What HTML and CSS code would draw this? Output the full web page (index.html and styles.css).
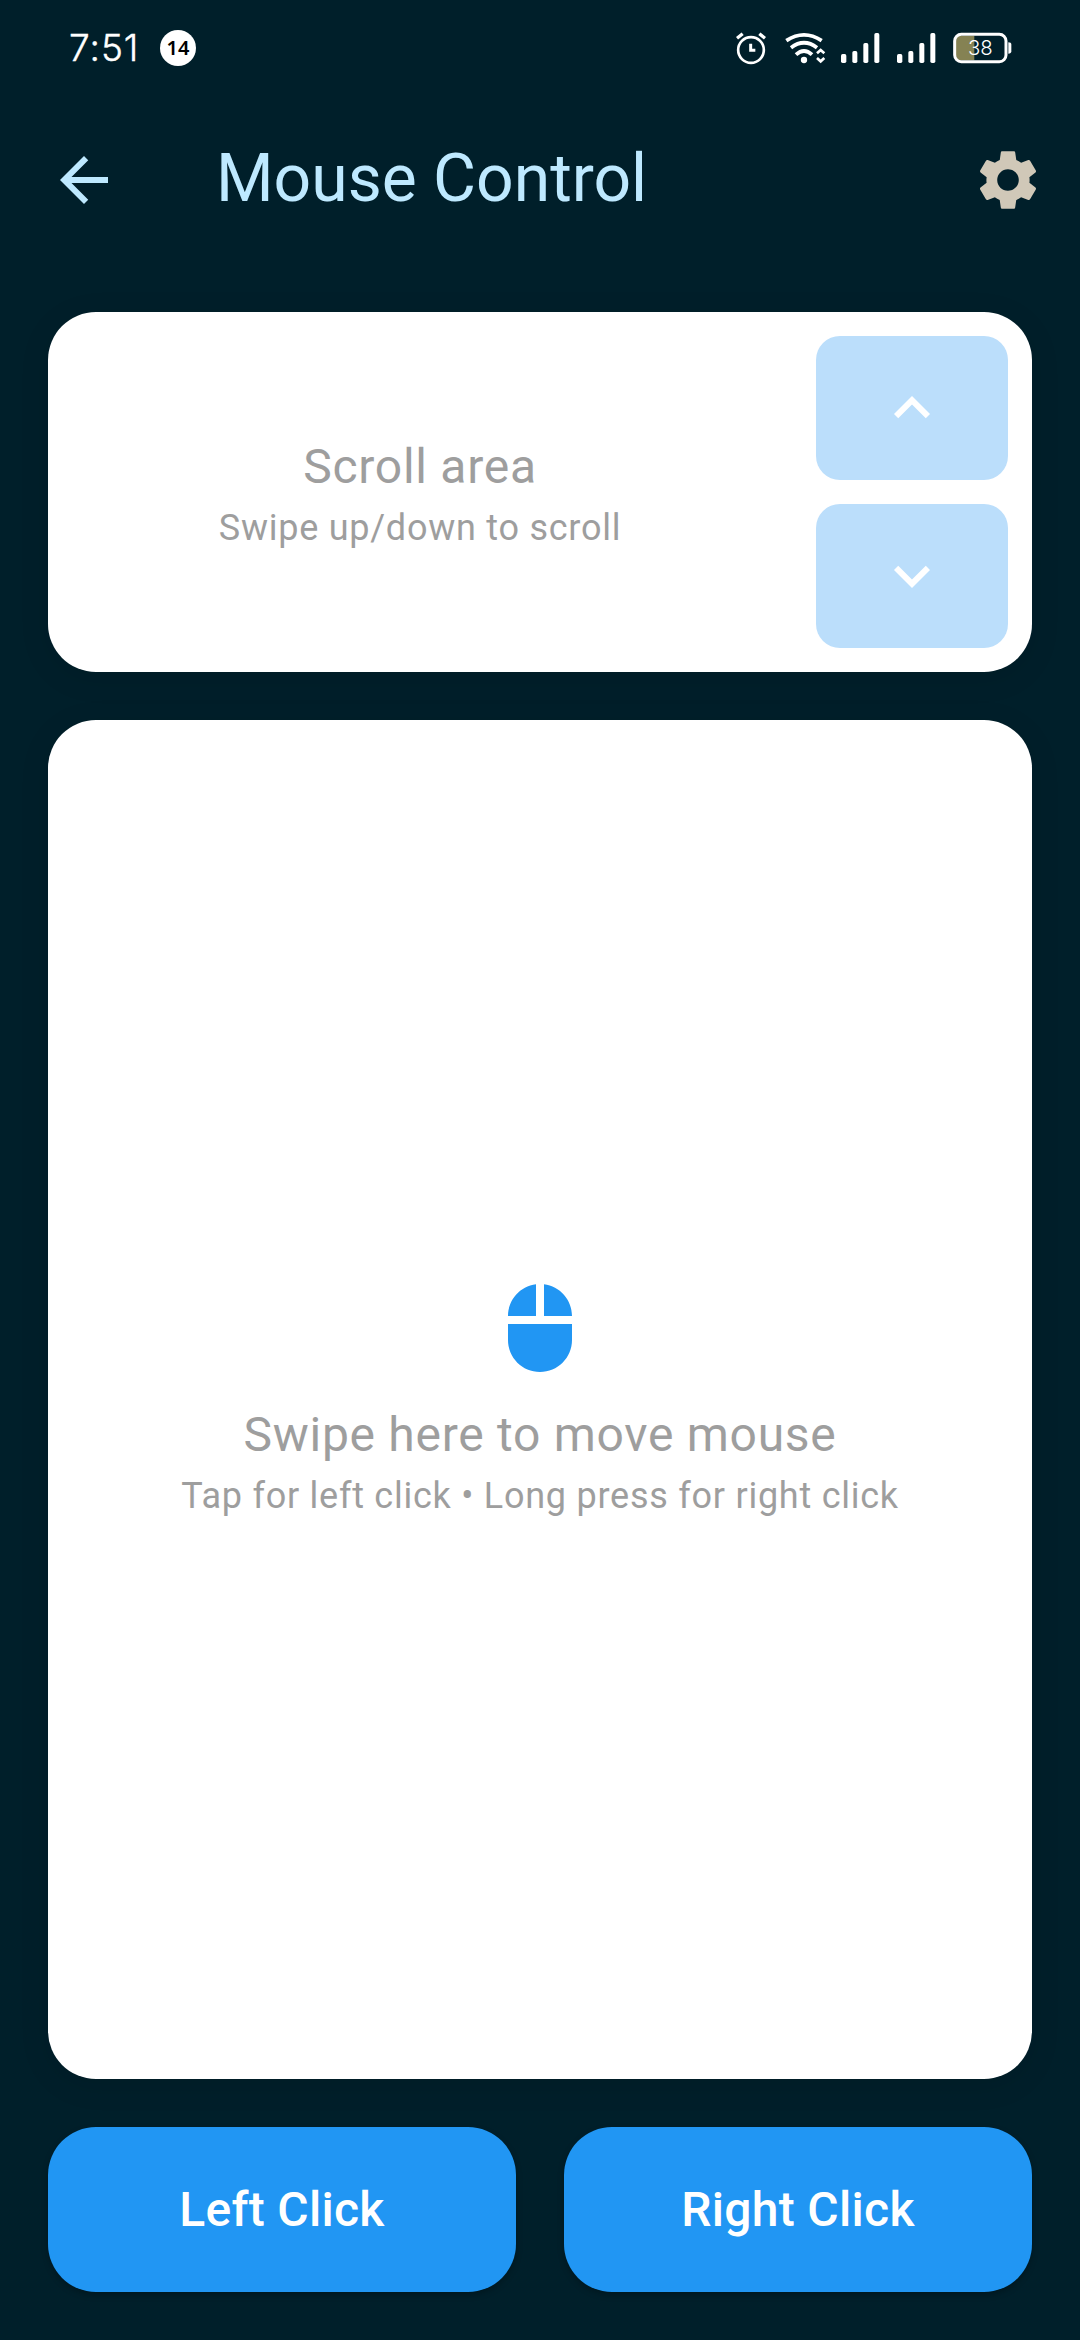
FILE: index.html
```html
<!DOCTYPE html>
<html lang="en">
<head>
<meta charset="utf-8">
<title>Mouse Control</title>
<link rel="stylesheet" href="styles.css">
</head>
<body>
<div class="screen">
  <div class="status">
    <span class="time">7:51</span>
    <span class="badge">14</span>
    <div class="status-icons">
      <svg class="alarm" viewBox="48 66 90 99" width="30" height="33">
        <g fill="none" stroke="#fff">
          <circle cx="93" cy="120" r="38.5" stroke-width="8"/>
          <path d="M51 85L68 71M135 85L118 71" stroke-width="10"/>
          <path d="M92 101V121H106" stroke-width="9"/>
        </g>
      </svg>
      <svg class="wifi" viewBox="195 66 123 99" width="41" height="33">
        <g fill="none" stroke="#fff" stroke-width="11.5">
          <path d="M199 92Q252 57 305 92"/>
          <path d="M213 113Q252 84 291 113"/>
          <path d="M228 134Q252 112 276 134"/>
          <path d="M291 130L302 120L313 130M291 144L302 154L313 144" stroke-width="8"/>
        </g>
        <circle cx="252" cy="150" r="9.5" fill="#fff"/>
      </svg>
      <svg class="signal" viewBox="362 66 117 99" width="39" height="33">
        <g fill="#fff">
          <rect x="362" y="132" width="16" height="27" rx="5"/>
          <rect x="396" y="123" width="15" height="36" rx="5"/>
          <rect x="429" y="99" width="15" height="60" rx="5"/>
          <rect x="462" y="69" width="15" height="90" rx="5"/>
        </g>
      </svg>
      <svg class="signal second" viewBox="362 66 117 99" width="39" height="33">
        <g fill="#fff">
          <rect x="362" y="132" width="16" height="27" rx="5"/>
          <rect x="396" y="123" width="15" height="36" rx="5"/>
          <rect x="429" y="99" width="15" height="60" rx="5"/>
          <rect x="462" y="69" width="15" height="90" rx="5"/>
        </g>
      </svg>
      <svg class="battery" viewBox="698 66 177 99" width="59" height="33">
        <path d="M762 77V151H722Q707 151 707 136V92Q707 77 722 77Z" fill="#858253"/>
        <rect x="703" y="73" width="154" height="82" rx="20" fill="none" stroke="#fff" stroke-width="9"/>
        <path d="M864 97Q873 97 873 104V124Q873 131 864 131Z" fill="#fff"/>
        <text class="level" x="780" y="135" text-anchor="middle">38</text>
      </svg>
    </div>
  </div>

  <header class="appbar">
    <svg class="icon" viewBox="0 0 24 24"><path d="M20 11H7.83l5.59-5.59L12 4l-8 8 8 8 1.41-1.41L7.83 13H20v-2z"/></svg>
    <h1 class="title">Mouse Control</h1>
    <svg class="icon gear" viewBox="0 0 24 24"><path d="M19.14 12.94c.04-.3.06-.61.06-.94 0-.32-.02-.64-.07-.94l2.03-1.58c.18-.14.23-.41.12-.61l-1.92-3.32c-.12-.22-.37-.29-.59-.22l-2.39.96c-.5-.38-1.03-.7-1.62-.94l-.36-2.54c-.04-.24-.24-.41-.48-.41h-3.84c-.24 0-.43.17-.47.41l-.36 2.54c-.59.24-1.13.57-1.62.94l-2.39-.96c-.22-.08-.47 0-.59.22L2.74 8.87c-.12.21-.08.47.12.61l2.03 1.58c-.05.3-.09.63-.09.94s.02.64.07.94l-2.03 1.58c-.18.14-.23.41-.12.61l1.92 3.32c.12.22.37.29.59.22l2.39-.96c.5.38 1.03.7 1.62.94l.36 2.54c.05.24.24.41.48.41h3.84c.24 0 .44-.17.47-.41l.36-2.54c.59-.24 1.13-.56 1.62-.94l2.39.96c.22.08.47 0 .59-.22l1.92-3.32c.12-.22.07-.47-.12-.61l-2.01-1.58zM12 15.6c-1.98 0-3.6-1.62-3.6-3.6s1.62-3.6 3.6-3.6 3.6 1.62 3.6 3.6-1.62 3.6-3.6 3.6z"/></svg>
  </header>

  <main class="content">
    <section class="card scroll">
      <div class="hint">
        <p class="primary">Scroll area</p>
        <p class="secondary">Swipe up/down to scroll</p>
      </div>
      <div class="steps">
        <div class="step"><svg class="icon" viewBox="0 0 24 24"><path d="M7.41 15.41L12 10.83l4.59 4.58L18 14l-6-6-6 6z"/></svg></div>
        <div class="step"><svg class="icon" viewBox="0 0 24 24"><path d="M7.41 8.59L12 13.17l4.59-4.58L18 10l-6 6-6-6z"/></svg></div>
      </div>
    </section>

    <section class="card touchpad">
      <svg class="mouse" viewBox="0 0 24 24"><path d="M13 1.07V9h7c0-4.08-3.05-7.44-7-7.93zM4 15c0 4.42 3.58 8 8 8s8-3.58 8-8v-4H4v4zm7-13.93C7.05 1.56 4 4.92 4 9h7V1.07z"/></svg>
      <p class="primary">Swipe here to move mouse</p>
      <p class="secondary">Tap for left click • Long press for right click</p>
    </section>

    <div class="buttons">
      <button class="btn">Left Click</button>
      <button class="btn">Right Click</button>
    </div>
  </main>
</div>
</body>
</html>
```
FILE: styles.css
```css
* { box-sizing: border-box; margin: 0; padding: 0; }
body { background: #001f2a; font-family: Roboto, sans-serif; }
.screen { width: 1080px; height: 2340px; display: flex; flex-direction: column; background: #001f2a; }
.status { height: 96px; padding: 0 68px 0 69px; display: flex; align-items: center; color: #fff; }
.time { font: 300 37px/44px Inter, sans-serif; letter-spacing: 1px; width: 91px; -webkit-text-stroke: 0.4px #fff; }
.badge { width: 36px; height: 36px; border-radius: 50%; background: #fff; color: #000; font: 600 20px/36px "Noto Sans", sans-serif; text-align: center; }
.status-icons { display: flex; margin-left: auto; }
.wifi { margin-left: 19px; }
.signal { margin-left: 15px; }
.second { margin-left: 17px; }
.battery { margin-left: 17px; }
.level { font: 300 61px Inter, sans-serif; fill: #fff; }
.appbar { height: 168px; padding: 0 36px 0 48px; display: flex; align-items: center; }
.icon { width: 72px; height: 72px; fill: #bee9ff; flex: none; }
.gear { fill: #d0c8b8; margin-left: auto; }
.title { margin: 0 0 2px 96px; font-size: 66px; line-height: 84px; font-weight: 400; color: #bee9ff; }
.content { flex: 1; padding: 48px; display: flex; flex-direction: column; gap: 48px; }
.card { background: #fff; border-radius: 48px; box-shadow: 0 6px 30px rgba(0, 0, 0, 0.1); display: flex; }
.scroll { height: 360px; }
.hint { flex: 1; display: flex; flex-direction: column; align-items: center; justify-content: center; }
.primary { font-size: 48px; line-height: 70px; margin-bottom: 2px; letter-spacing: 0.72px; color: #9e9e9e; }
.secondary { font-size: 36px; line-height: 48px; letter-spacing: 0.75px; color: #9e9e9e; }
.steps { width: 240px; padding: 24px; display: flex; flex-direction: column; gap: 24px; }
.step { flex: 1; border-radius: 24px; background: #bbdefb; display: flex; align-items: center; justify-content: center; }
.step .icon { fill: #fff; }
.touchpad { flex: 1; flex-direction: column; align-items: center; justify-content: center; }
.mouse { width: 96px; height: 96px; fill: #2196f3; margin-bottom: 24px; }
.buttons { display: flex; gap: 48px; height: 165px; }
.btn { flex: 1; border: 0; border-radius: 48px; background: #2196f3; color: #fff; font: 500 48px/72px Roboto, sans-serif; letter-spacing: 0.3px; box-shadow: 0 3px 6px rgba(0, 0, 0, 0.25); }
```
